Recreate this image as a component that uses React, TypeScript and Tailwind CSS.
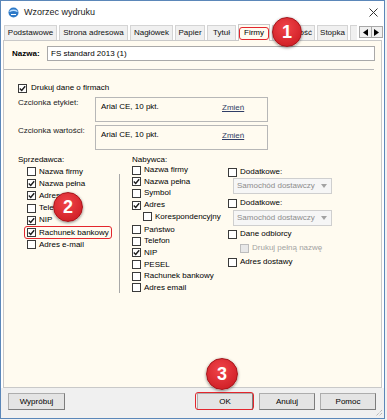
import React from 'react';

const tabs = [
  { label: 'Podstawowe', w: 'w-[53px]' },
  { label: 'Strona adresowa', w: 'w-[69px]' },
  { label: 'Nagłówek', w: 'w-[43px]' },
  { label: 'Papier', w: 'w-[30px]' },
  { label: 'Tytuł', w: 'w-[29px]' },
  { label: 'Firmy', w: 'w-[32px]', active: true },
  { label: 'Zawartość', w: 'w-[43px]' },
  { label: 'Stopka', w: 'w-[31px]' },
];

function Check({ checked, disabled }: { checked?: boolean; disabled?: boolean }) {
  return (
    <span
      className={`flex h-[9px] w-[9px] shrink-0 items-center justify-center border ${
        disabled ? 'border-[#bdbdbd] bg-[#e8e8e8]' : 'border-[#3a3a3a] bg-white'
      }`}
    >
      {checked && (
        <svg width="7" height="7" viewBox="0 0 7 7">
          <path d="M0.8 3.6 L2.7 5.4 L6.2 1.3" fill="none" stroke="#1a1a1a" strokeWidth="1.4" />
        </svg>
      )}
    </span>
  );
}

function Badge({ n, className }: { n: string; className: string }) {
  return (
    <div
      className={`absolute z-20 flex items-center justify-center rounded-full border border-[#a3141a] bg-[radial-gradient(circle_at_45%_35%,#f0444a,#c8161d)] text-[18px] font-bold text-white shadow-[0_1px_3px_rgba(0,0,0,0.45)] ${className}`}
    >
      {n}
    </div>
  );
}

function Select() {
  return (
    <div className="ml-[5px] flex h-[16px] w-[99px] items-center border border-[#cfcfcf] bg-[#f6f6f6] pl-[3px] text-[#8c8c8c]">
      <span>Samochód dostawczy</span>
      <svg className="ml-auto mr-[4px]" width="6" height="4" viewBox="0 0 6 4">
        <path d="M0 0 H6 L3 4 Z" fill="#a3a3a3" />
      </svg>
    </div>
  );
}

function FontBox({ label }: { label: string }) {
  return (
    <div className="mt-[3px] flex pl-[14px]">
      <span className="h-[12px] w-[77px] leading-[12px] text-[#222]">{label}</span>
      <div className="flex h-[25px] w-[173px] items-start border border-[#b7b7b7] pl-[5px] pt-[3px]">
        <span className="w-[121px] leading-[12px]">Arial CE, 10 pkt.</span>
        <span className="mt-[1px] leading-[12px] text-[#2f3d66] underline">Zmień</span>
      </div>
    </div>
  );
}

export default function App() {
  const seller = [
    { label: 'Nazwa firmy' },
    { label: 'Nazwa pełna', checked: true },
    { label: 'Adres', checked: true },
    { label: 'Telefon' },
    { label: 'NIP', checked: true },
    { label: 'Rachunek bankowy', checked: true, mark: true },
    { label: 'Adres e-mail' },
  ];

  return (
    <div className="h-[420px] w-[387px] bg-[#f2f2f2] font-['Liberation_Sans',Arial,sans-serif] text-[8px] leading-none text-black">
      <div className="relative flex h-[419px] w-[385px] flex-col border border-[#5b87b9] bg-white">
        {/* pasek tytułu */}
        <div className="flex h-[23px] shrink-0 items-center pl-[7px] pr-[6px]">
          <svg width="11" height="11" viewBox="0 0 11 11">
            <circle cx="5.5" cy="5.5" r="5" fill="#2d79c7" />
            <path d="M1.5 4.5 Q5.5 2 9.5 4.5" fill="none" stroke="#bfe0ff" strokeWidth="1.3" />
            <path d="M3 7.5 H8" stroke="#ffffff" strokeWidth="1" />
          </svg>
          <span className="ml-[5px] text-[9px] text-[#1a1a1a]">Wzorzec wydruku</span>
          <svg className="ml-auto" width="9" height="9" viewBox="0 0 9 9">
            <path d="M0.5 0.5 L8.5 8.5 M8.5 0.5 L0.5 8.5" stroke="#333" strokeWidth="1" />
          </svg>
        </div>

        {/* zakładki */}
        <div className="flex h-[16px] shrink-0 items-end gap-[2px] pl-[3px]">
          {tabs.map((t) =>
            t.active ? (
              <div
                key={t.label}
                className={`relative z-10 -mb-px flex h-[17px] ${t.w} items-center justify-center border border-b-0 border-[#c9c9c9] bg-[#fffbf0]`}
              >
                {t.label}
                <span className="absolute inset-x-0 bottom-px top-[2px] rounded-[3px] border-[1.5px] border-[#e3262d]" />
              </div>
            ) : (
              <div
                key={t.label}
                className={`flex h-[15px] ${t.w} items-center justify-center border border-b-0 border-[#d4d4d4] bg-[#f0f0f0] text-[#111]`}
              >
                {t.label}
              </div>
            ),
          )}
          <div className="h-[15px] w-[7px] border border-b-0 border-r-0 border-[#d4d4d4] bg-[#f0f0f0]" />
          <div className="mb-[2px] flex h-[12px] w-[24px] border border-[#a8a8a8] bg-[#f0f0f0]">
            <div className="flex flex-1 items-center justify-center border-r border-[#a8a8a8]">
              <svg width="5" height="7" viewBox="0 0 5 7">
                <path d="M5 0 V7 L0 3.5 Z" fill="#000" />
              </svg>
            </div>
            <div className="flex flex-1 items-center justify-center">
              <svg width="5" height="7" viewBox="0 0 5 7">
                <path d="M0 0 V7 L5 3.5 Z" fill="#000" />
              </svg>
            </div>
          </div>
        </div>

        {/* panel */}
        <div className="mx-[2px] flex h-[348px] shrink-0 flex-col border border-[#c9c9c9] bg-[#fffbf0]">
          <div className="mt-[5px] flex h-[15px] items-center pl-[8px]">
            <span className="w-[35px] font-bold">Nazwa:</span>
            <div className="flex h-[15px] w-[328px] items-center border border-[#a9a9a9] bg-white pl-[3px]">
              FS standard 2013 (1)
            </div>
          </div>
          <div className="mt-[8px] h-px w-[370px] bg-[#b9b9b9]" />

          <div className="mt-[12px] flex h-[12px] items-center gap-[4px] pl-[14px]">
            <Check checked />
            <span>Drukuj dane o firmach</span>
          </div>

          <FontBox label="Czcionka etykiet:" />
          <FontBox label="Czcionka wartości:" />

          <div className="mt-[5px] flex pl-[14px]">
            {/* sprzedawca */}
            <div className="flex w-[102px] flex-col">
              <span className="h-[10px] leading-[10px]">Sprzedawca:</span>
              <div className="flex items-start">
                <div className="flex flex-1 flex-col pl-[9px] pt-[0.5px]">
                  {seller.map((r) => (
                    <div key={r.label} className="relative flex h-[12.2px] w-fit items-center gap-[3px]">
                      <Check checked={r.checked} />
                      <span>{r.label}</span>
                      {r.mark && (
                        <span className="absolute -left-[3px] -right-[3px] top-0 bottom-0 rounded-[3px] border-[1.5px] border-[#e3262d]" />
                      )}
                    </div>
                  ))}
                </div>
                <div className="mt-[8.5px] h-[119px] w-px bg-[#a8a8a8]" />
              </div>
            </div>

            {/* nabywca */}
            <div className="ml-[12px] flex w-[96px] flex-col">
              <span className="h-[9.5px] leading-[9.5px]">Nabywca:</span>
              <div className="flex h-[11.6px] items-center gap-[3px]">
                <Check />
                <span>Nazwa firmy</span>
              </div>
              <div className="flex h-[11.6px] items-center gap-[3px]">
                <Check checked />
                <span>Nazwa pełna</span>
              </div>
              <div className="flex h-[11.6px] items-center gap-[3px]">
                <Check />
                <span>Symbol</span>
              </div>
              <div className="flex h-[11.6px] items-center gap-[3px]">
                <Check checked />
                <span>Adres</span>
              </div>
              <div className="flex h-[11.6px] items-center gap-[3px] pl-[11px]">
                <Check />
                <span>Korespondencyjny</span>
              </div>
              <div className="mt-[1.5px] flex h-[11.6px] items-center gap-[3px]">
                <Check />
                <span>Państwo</span>
              </div>
              <div className="flex h-[11.6px] items-center gap-[3px]">
                <Check />
                <span>Telefon</span>
              </div>
              <div className="flex h-[11.6px] items-center gap-[3px]">
                <Check checked />
                <span>NIP</span>
              </div>
              <div className="flex h-[11.6px] items-center gap-[3px]">
                <Check />
                <span>PESEL</span>
              </div>
              <div className="flex h-[11.6px] items-center gap-[3px]">
                <Check />
                <span>Rachunek bankowy</span>
              </div>
              <div className="flex h-[11.6px] items-center gap-[3px]">
                <Check />
                <span>Adres email</span>
              </div>
            </div>

            {/* dodatkowe */}
            <div className="mt-[11px] flex flex-col">
              <div className="flex h-[12px] items-center gap-[3px]">
                <Check />
                <span>Dodatkowe:</span>
              </div>
              <Select />
              <div className="mt-[3px] flex h-[12px] items-center gap-[3px]">
                <Check />
                <span>Dodatkowe:</span>
              </div>
              <div className="mt-[1px]">
                <Select />
              </div>
              <div className="mt-[2px] flex h-[12px] items-center gap-[3px]">
                <Check />
                <span>Dane odbiorcy</span>
              </div>
              <div className="mt-[2px] flex h-[12px] items-center gap-[3px] pl-[12px] text-[#a3a3a3]">
                <Check disabled />
                <span>Drukuj pełną nazwę</span>
              </div>
              <div className="mt-[2px] flex h-[12px] items-center gap-[3px]">
                <Check />
                <span>Adres dostawy</span>
              </div>
            </div>
          </div>
        </div>

        {/* stopka */}
        <div className="relative flex flex-1 items-start bg-[#f0f0f0] pl-[7px] pt-[5px]">
          <button className="flex h-[17px] w-[57px] items-center justify-center border border-[#adadad] border-b-[#7d7d7d] border-r-[#7d7d7d] bg-[#e4e4e4]">
            Wypróbuj
          </button>
          <button className="relative ml-[132px] flex h-[17px] w-[56px] items-center justify-center border border-[#adadad] border-b-[#7d7d7d] border-r-[#7d7d7d] bg-[#e4e4e4]">
            OK
            <span className="absolute -bottom-[1px] -left-[3px] -right-[2px] -top-[2px] rounded-[3px] border-[1.5px] border-[#e3262d]" />
          </button>
          <button className="ml-[6px] flex h-[17px] w-[56px] items-center justify-center border border-[#adadad] border-b-[#7d7d7d] border-r-[#7d7d7d] bg-[#e4e4e4]">
            Anuluj
          </button>
          <button className="ml-[5px] flex h-[17px] w-[56px] items-center justify-center border border-[#adadad] border-b-[#7d7d7d] border-r-[#7d7d7d] bg-[#e4e4e4]">
            Pomoc
          </button>
          <svg className="absolute bottom-[1px] right-[1px]" width="9" height="9" viewBox="0 0 9 9">
            <path d="M8 2 L2 8 M8 5 L5 8 M8 8 L8 8" stroke="#a0a0a0" strokeWidth="1" strokeDasharray="1 1" />
          </svg>
        </div>

        <Badge n="1" className="left-[271px] top-[16px] h-[30px] w-[30px]" />
        <Badge n="2" className="left-[52px] top-[191px] h-[30px] w-[30px]" />
        <Badge n="3" className="left-[205px] top-[357px] h-[32px] w-[32px]" />
      </div>
    </div>
  );
}
